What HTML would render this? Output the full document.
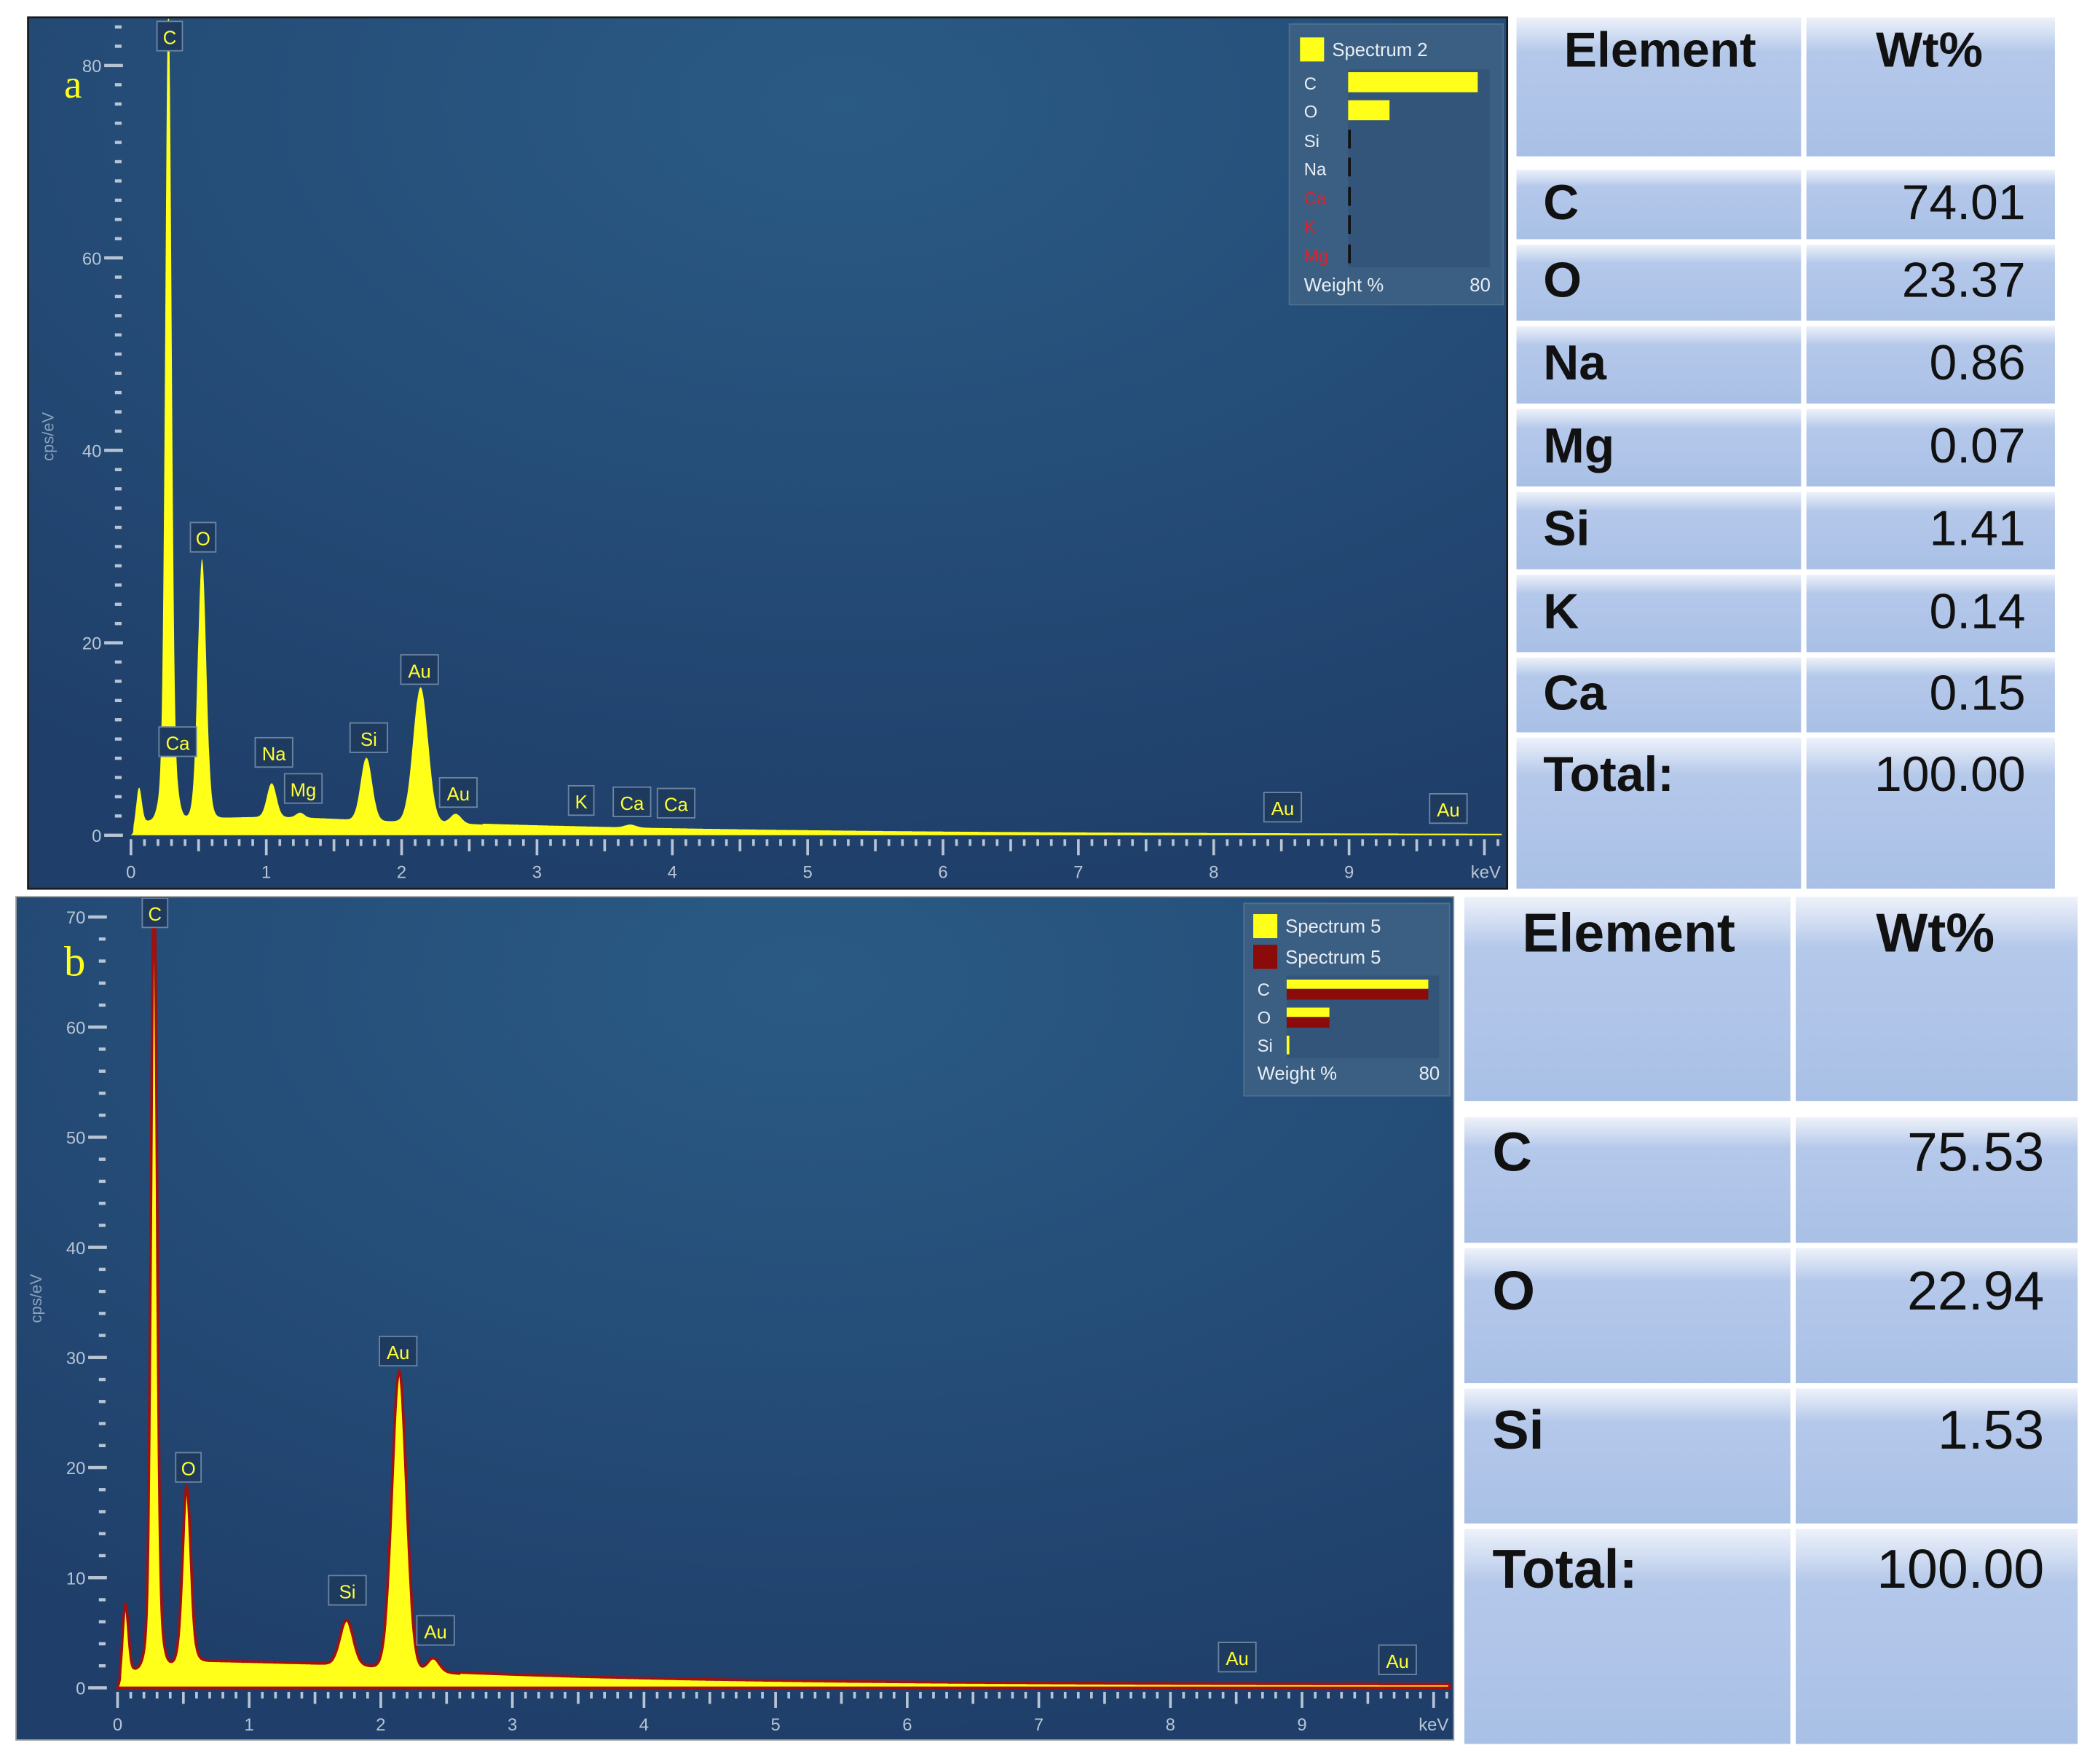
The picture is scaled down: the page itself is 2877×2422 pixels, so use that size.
<!DOCTYPE html>
<html><head><meta charset="utf-8">
<style>
html,body{margin:0;padding:0;background:#fff;}
svg{display:block;}
</style></head>
<body>
<svg id="s" width="2877" height="2422" viewBox="0 0 1568 1320" preserveAspectRatio="none" xmlns="http://www.w3.org/2000/svg" font-family="Liberation Sans, sans-serif">
<defs>
<radialGradient id="bg" cx="0.55" cy="0.1" r="0.9">
<stop offset="0" stop-color="#2a5b85"/><stop offset="1" stop-color="#1f3f6a"/>
</radialGradient>
<linearGradient id="cell" x1="0" y1="0" x2="0" y2="1">
<stop offset="0" stop-color="#eef2fa"/><stop offset="0.25" stop-color="#b4c8ea"/><stop offset="1" stop-color="#a9c0e6"/>
</linearGradient>
<clipPath id="ca"><rect x="21" y="14" width="1107" height="651"/></clipPath>
<clipPath id="cb"><rect x="12" y="672" width="1076" height="630"/></clipPath>
</defs>
<rect x="21" y="13" width="1107" height="652" fill="url(#bg)" stroke="#1a1a1a" stroke-width="1.5"/>
<rect x="12" y="671" width="1076" height="631" fill="url(#bg)" stroke="#999" stroke-width="1"/>
<g id="ga" clip-path="url(#ca)"></g><g id="gb" clip-path="url(#cb)"></g>
<!-- legend a -->
<rect x="965" y="18" width="160" height="210" fill="#3b5f82" stroke="#4d6f92"/>
<rect x="1009" y="52" width="106" height="148" fill="#33557a"/>
<rect x="973" y="28" width="18" height="18" fill="#ffff1a"/>
<text x="997" y="42" font-size="14" fill="#e8eef5">Spectrum 2</text>
<g font-size="13" fill="#e8eef5"><text x="976" y="67">C</text><text x="976" y="88">O</text><text x="976" y="110">Si</text><text x="976" y="131">Na</text><text x="976" y="153" fill="#e0202a">Ca</text><text x="976" y="174" fill="#e0202a">K</text><text x="976" y="196" fill="#e0202a">Mg</text>
<text x="976" y="218" font-size="14">Weight %</text><text x="1100" y="218" font-size="14">80</text></g>
<rect x="1009" y="54" width="97" height="15" fill="#ffff1a"/><rect x="1009" y="75" width="31" height="15" fill="#ffff1a"/>
<g fill="#111"><rect x="1009" y="97" width="2" height="14"/><rect x="1009" y="118" width="2" height="14"/><rect x="1009" y="140" width="2" height="14"/><rect x="1009" y="161" width="2" height="14"/><rect x="1009" y="183" width="2" height="14"/></g>
<!-- legend b -->
<rect x="931" y="676" width="154" height="144" fill="#3b5f82" stroke="#4d6f92"/>
<rect x="963" y="730" width="114" height="62" fill="#33557a"/>
<rect x="938" y="684" width="18" height="18" fill="#ffff1a"/>
<rect x="938" y="707" width="18" height="18" fill="#8b0a0a"/>
<g font-size="13" fill="#e8eef5"><text x="962" y="698" font-size="14">Spectrum 5</text><text x="962" y="721" font-size="14">Spectrum 5</text>
<text x="941" y="745">C</text><text x="941" y="766">O</text><text x="941" y="787">Si</text>
<text x="941" y="808" font-size="14">Weight %</text><text x="1062" y="808" font-size="14">80</text></g>
<rect x="963" y="733" width="106" height="7" fill="#ffff1a"/><rect x="963" y="740" width="106" height="8" fill="#8b0a0a"/>
<rect x="963" y="754" width="32" height="7" fill="#ffff1a"/><rect x="963" y="761" width="32" height="8" fill="#8b0a0a"/>
<rect x="963" y="775" width="2" height="14" fill="#ffff1a"/>
<text x="48" y="73" font-size="30" fill="#ffff1a" font-family="Liberation Serif, serif">a</text>
<text x="48" y="730" font-size="32" fill="#ffff1a" font-family="Liberation Serif, serif">b</text>
<text transform="translate(40,345) rotate(-90)" font-size="12" fill="#8aa0bb">cps/eV</text>
<text transform="translate(31,990) rotate(-90)" font-size="12" fill="#8aa0bb">cps/eV</text>
<g id="ta"></g>
<g id="tb"></g>
</svg>
<script>
var NS="http://www.w3.org/2000/svg";
function el(p,t,a,txt){var e=document.createElementNS(NS,t);for(var k in a)e.setAttribute(k,a[k]);if(txt!=null)e.textContent=txt;p.appendChild(e);return e;}
function g(E,c,s,h){return h*Math.exp(-0.5*Math.pow((E-c)/s,2));}
function axis(G,o){
 for(var v=0;v<=o.ymax;v+=2){var y=o.y0-v*o.py;var big=v%o.step==0;
  el(G,'rect',{x:o.tx-(big?8:0),y:y-1.2,width:big?14:5,height:2.4,fill:'#b7c4d4'});
  if(big)el(G,'text',{x:o.tx-10,y:y+5,'font-size':13,fill:'#b7c4d4','text-anchor':'end'},v);}
 for(var i=0;i<=104;i++){var E=i/10;var x=o.x0+E*o.px;if(x>o.xend)break;var L=i%10==0?12:(i%5==0?9:5);
  el(G,'rect',{x:x-1,y:o.y0+3,width:2,height:L,fill:'#b7c4d4'});
  if(i%10==0&&i<100)el(G,'text',{x:x,y:o.y0+32,'font-size':13,fill:'#b7c4d4','text-anchor':'middle'},i/10);}
 el(G,'text',{x:o.xend-12,y:o.y0+32,'font-size':13,fill:'#b7c4d4','text-anchor':'middle'},'keV');
}
function spec(G,o){
 var d='M'+o.x0+','+o.y0;
 for(var E=0;E<=10.3;E+=0.004){var x=o.x0+E*o.px;if(x>o.xend)break;var v=o.f(E);d+=' L'+x.toFixed(1)+','+(o.y0-v*o.py).toFixed(1);}
 d+=' L'+o.xend+','+o.y0+' Z';
 return el(G,'path',{d:d,fill:'#ffff1a'});
}
function lab(G,x,y,t){var w=t.length*9+10;el(G,'rect',{x:x-w/2,y:y-12,width:w,height:22,fill:'#1e3a5e',stroke:'#6b85a3','stroke-width':1});
 el(G,'text',{x:x,y:y+5,'font-size':14,fill:'#ffff33','text-anchor':'middle'},t);}
function bgA(E){if(E<0.02)return 0;var r=Math.min(1,E/0.05);return r*(E<2.6?1.3+0.6*Math.exp(-Math.pow((E-1)/0.8,2))-0.5*Math.max(0,E-2.2):1.1*Math.exp(-(E-2.6)/2.5)+0.1);}
var A={x0:98,px:101.3,y0:625,py:7.2,xend:1124,tx:86,ymax:84,step:20,
 f:function(E){return bgA(E)+g(E,0.06,0.02,3.5)+g(E,0.277,0.022,75)+g(E,0.28,0.045,10)+g(E,0.525,0.03,24)+g(E,0.525,0.05,3)+g(E,1.04,0.035,3.5)+g(E,1.25,0.03,0.5)+g(E,1.74,0.042,6.5)+g(E,2.14,0.055,14)+g(E,2.4,0.04,1)+g(E,3.69,0.04,0.3);}};
var ga=document.getElementById('ga');axis(ga,A);spec(ga,A);
[[127,28,'C'],[152,403,'O'],[133,556,'Ca'],[205,564,'Na'],[227,591,'Mg'],[276,553,'Si'],[314,502,'Au'],[343,594,'Au'],[435,600,'K'],[473,601,'Ca'],[506,602,'Ca'],[960,605,'Au'],[1084,606,'Au']].forEach(function(a){lab(ga,a[0],a[1],a[2]);});
function bgB(E){if(E<0.02)return 0;var r=Math.min(1,E/0.05);var v;if(E<0.6)v=1.5+E*1.5;else if(E<1.8)v=2.5-0.3*(E-0.6);else if(E<2.6)v=2.1-1.0*(E-1.8);else v=0.3+1.1*Math.exp(-(E-2.6)/2.2);return r*v;}
var B={x0:88,px:98.5,y0:1263,py:8.24,xend:1085,tx:74,ymax:70,step:10,
 f:function(E){return bgB(E)+g(E,0.06,0.022,6)+g(E,0.277,0.022,64)+g(E,0.28,0.045,7)+g(E,0.525,0.03,14)+g(E,0.525,0.05,2)+g(E,1.74,0.05,4)+g(E,2.14,0.055,27)+g(E,2.4,0.045,1.2);}};
var gb=document.getElementById('gb');axis(gb,B);var pb=spec(gb,B);pb.setAttribute('stroke','#a01010');pb.setAttribute('stroke-width','2');
[[116,684,'C'],[141,1099,'O'],[260,1191,'Si'],[298,1012,'Au'],[326,1221,'Au'],[926,1241,'Au'],[1046,1243,'Au']].forEach(function(a){lab(gb,a[0],a[1],a[2]);});
function table(G,c1,c2,c3,rows,hy,fs,xl,xr){
 rows.forEach(function(r,i){
  el(G,'rect',{x:c1,y:r[0],width:c2-2-c1,height:r[1]-r[0],fill:'url(#cell)'});
  el(G,'rect',{x:c2+2,y:r[0],width:c3-c2-2,height:r[1]-r[0],fill:'url(#cell)'});
  if(i==0){el(G,'text',{x:(c1+c2)/2,y:hy,'font-size':fs,'font-weight':'bold',fill:'#111','text-anchor':'middle'},r[2]);
   el(G,'text',{x:(c2+c3)/2,y:hy,'font-size':fs,'font-weight':'bold',fill:'#111','text-anchor':'middle'},r[3]);}
  else{el(G,'text',{x:xl,y:r[4],'font-size':fs,'font-weight':'bold',fill:'#111'},r[2]);
   el(G,'text',{x:xr,y:r[4],'font-size':fs,fill:'#111','text-anchor':'end'},r[3]);}
 });
}
table(document.getElementById('ta'),1135,1350,1538,[
 [13,117,'Element','Wt%'],[127,179,'C','74.01',164],[183,240,'O','23.37',222],[244,302,'Na','0.86',284],[306,364,'Mg','0.07',346],
 [368,426,'Si','1.41',408],[430,488,'K','0.14',470],[492,548,'Ca','0.15',531],[552,665,'Total:','100.00',592]],50,37,1155,1516);
table(document.getElementById('tb'),1096,1342,1555,[
 [671,824,'Element','Wt%'],[836,930,'C','75.53',876],[934,1035,'O','22.94',980],[1039,1140,'Si','1.53',1084],[1144,1305,'Total:','100.00',1188]],712,41,1117,1530);
</script>
</body></html>
